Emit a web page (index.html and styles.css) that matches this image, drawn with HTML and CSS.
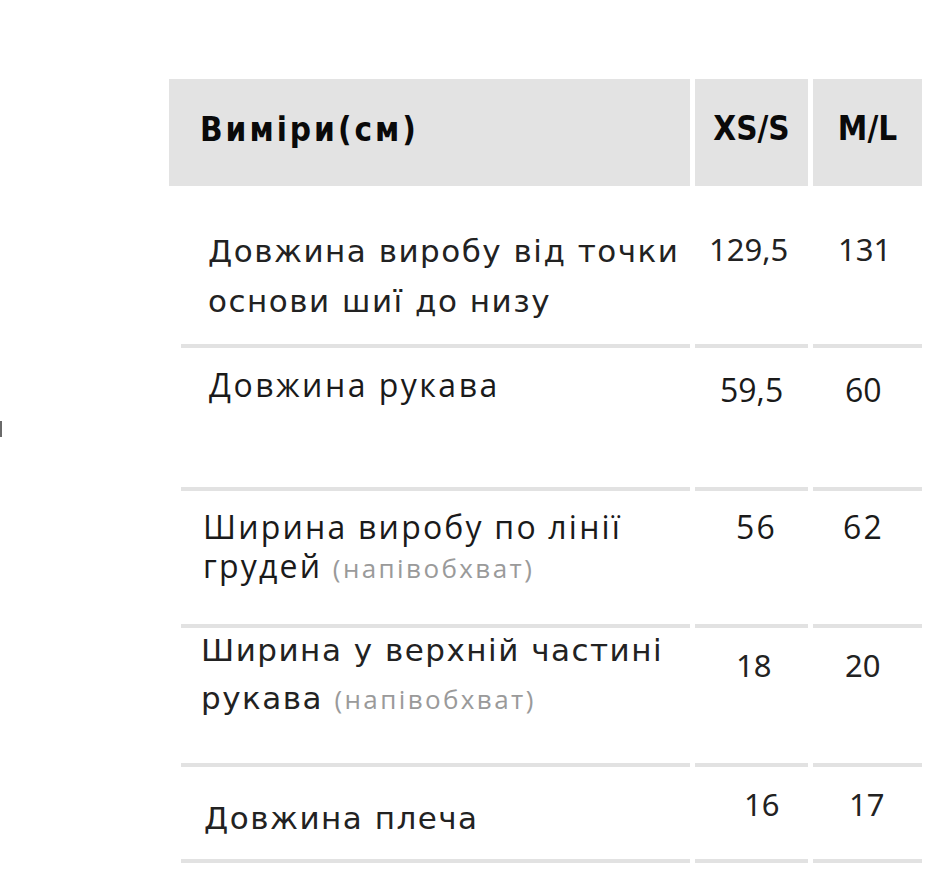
FILE: index.html
```html
<!DOCTYPE html>
<html lang="uk">
<head>
<meta charset="utf-8">
<link rel="stylesheet" href="styles.css">
</head>
<body>
<div class="page">
  <div class="side"><span class="cut"></span></div>
  <div class="table">
    <div class="hcell h-name">Виміри(см)</div>
    <div class="hcell h-size">XS/S</div>
    <div class="hcell h-size">M/L</div>

    <div class="cell name r1 mont">Довжина виробу від точки<br>основи шиї до низу</div>
    <div class="cell num r1 digits n1a">129,5</div>
    <div class="cell num r1 digits n1b">131</div>

    <div class="cell name r2 open">Довжина рукава</div>
    <div class="cell num r2 open n2a">59,5</div>
    <div class="cell num r2 open n2b">60</div>

    <div class="cell name r3 open">Ширина виробу по лінії<br>грудей <span class="note">(напівобхват)</span></div>
    <div class="cell num r3 open n3a">56</div>
    <div class="cell num r3 open n3b">62</div>

    <div class="cell name r4 mont">Ширина у верхній частині<br>рукава <span class="note">(напівобхват)</span></div>
    <div class="cell num r4 digits n4a">18</div>
    <div class="cell num r4 digits n4b">20</div>

    <div class="cell name r5 mont">Довжина плеча</div>
    <div class="cell num r5 digits n5a">16</div>
    <div class="cell num r5 digits n5b">17</div>
  </div>
</div>
</body>
</html>
```
FILE: styles.css
```css
html, body {
  margin: 0;
  padding: 0;
  background: #ffffff;
}
.page {
  display: flex;
  padding-top: 79px;
  color: #1e1e1e;
}
.side {
  width: 169px;
  flex: none;
}
.cut {
  display: block;
  width: 2px;
  height: 16px;
  margin-top: 342px;
  background: #6a6a6a;
}
.table {
  display: grid;
  grid-template-columns: 521px 113px 109px;
  grid-template-rows: 107px 162px 143px 137px 139px 96px;
  column-gap: 5px;
}
.hcell {
  background: #e3e3e3;
  font-family: "DejaVu Sans Condensed", "DejaVu Sans", sans-serif;
  font-stretch: condensed;
  font-weight: 700;
  font-size: 33px;
  line-height: 1;
  color: #0a0a0a;
}
.h-name {
  padding: 34px 0 0 31px;
  letter-spacing: 3px;
}
.h-size {
  padding-top: 33px;
  text-align: center;
  letter-spacing: 0;
}
.cell {
  border-bottom: 4px solid #e2e2e2;
  box-sizing: border-box;
}
.name {
  margin-left: 12px;
}
.mont {
  font-family: "DejaVu Sans", sans-serif;
  font-weight: 400;
  font-size: 31px;
  letter-spacing: 1.5px;
  color: #222;
}
.digits {
  font-family: "Noto Sans", sans-serif;
  font-weight: 400;
  font-size: 31px;
  letter-spacing: 0;
  color: #222;
}
.open {
  font-family: "Open Sans", sans-serif;
  font-weight: 400;
  font-size: 32px;
  letter-spacing: 2.5px;
  color: #1a1a1a;
}
.r3.open {
  letter-spacing: 2.2px;
}
.note {
  font-family: "Open Sans", sans-serif;
  color: #9a9a9a;
  font-size: 26px;
  letter-spacing: 2.4px;
}
.num {
  line-height: 1;
}
.r1.name { padding: 40px 0 0 27px; line-height: 50px; }
.r2.name { padding: 17px 0 0 28px; line-height: 40px; }
.r3.name { padding: 16px 0 0 22px; line-height: 39px; }
.r4.name { margin-top: -2px; padding: 0 0 0 20px; line-height: 48px; }
.r5.name { padding: 31px 0 0 23px; line-height: 40px; }

.n1a { padding: 48px 0 0 14px; }
.n1b { padding: 48px 0 0 25px; }
.n2a { padding: 26px 0 0 25px; letter-spacing: 0; }
.n2b { padding: 26px 0 0 32px; letter-spacing: 0; }
.n3a { padding: 20px 0 0 41px; letter-spacing: 0; }
.n3b { padding: 20px 0 0 30px; letter-spacing: 0; }
.n4a { padding: 22px 0 0 41px; }
.n4b { padding: 22px 0 0 32px; }
.n5a { padding: 22px 0 0 49px; }
.n5b { padding: 22px 0 0 36px; }
```
